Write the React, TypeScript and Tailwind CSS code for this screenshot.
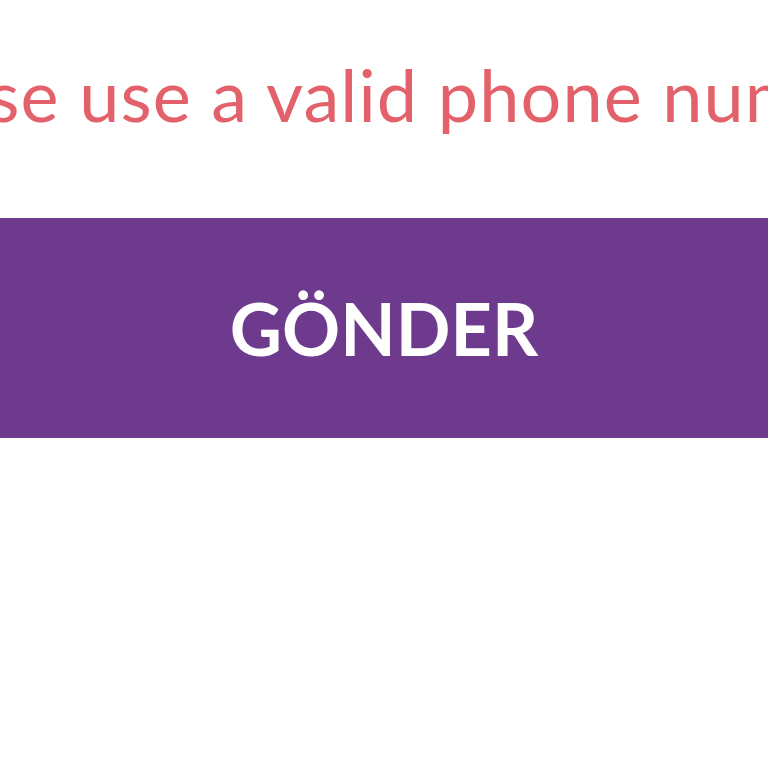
export default function App() {
  return (
    <div className="h-[768px] w-full overflow-hidden bg-white font-['Lato','Open_Sans',sans-serif]">
      <div className="pt-[49px] whitespace-nowrap">
        <p className="-ml-[150px] text-[72px] leading-[90px] tracking-[1.1px] text-[#e2616a]">
          Please use a valid phone number
        </p>
      </div>
      <button
        type="button"
        className="mt-[79px] flex h-[220px] w-full items-center justify-center bg-[#6d3a8e] text-[72px] font-bold text-white"
      >
        GÖNDER
      </button>
    </div>
  );
}
